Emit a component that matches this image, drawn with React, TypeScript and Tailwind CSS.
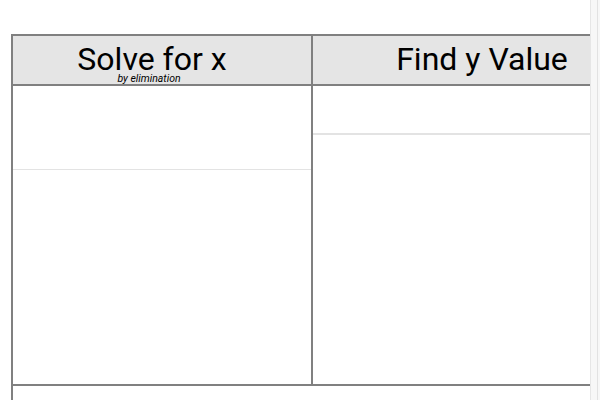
import React from "react";

const App: React.FC = () => {
  return (
    <div className="flex h-[400px] overflow-hidden bg-white font-['Roboto',sans-serif] text-black">
      <div className="min-w-0 flex-1 overflow-hidden pt-[34px] pl-[11px]">
        <div className="w-[660px] border-l-2 border-[#808080]">
          {/* header row */}
          <div className="flex border-y-2 border-[#808080] bg-[#e5e5e5]">
            <div className="flex h-[48px] w-[298px] flex-col items-center pr-[20px] leading-none">
              <span className="mt-[7px] text-[32px] leading-[32px]">Solve for x</span>
              <span className="mt-[-1px] mr-[6px] text-[10.5px] italic leading-[10px]">by elimination</span>
            </div>
            <div className="flex h-[48px] flex-1 justify-center border-l-2 border-[#808080] pr-[20px]">
              <span className="mt-[7px] text-[32px] leading-[32px]">Find y Value</span>
            </div>
          </div>
          {/* body */}
          <div className="flex border-b-2 border-[#808080]">
            <div className="flex w-[298px] flex-col">
              <div className="h-[84px] border-b border-[#e3e3e3]" />
              <div className="h-[214px]" />
            </div>
            <div className="flex flex-1 flex-col border-l-2 border-[#808080]">
              <div className="h-[49px] border-b-2 border-[#e3e3e3]" />
              <div className="flex-1" />
            </div>
          </div>
          <div className="h-[120px]" />
        </div>
      </div>
      {/* scrollbar track */}
      <div className="w-[10px] shrink-0 border-l border-[#e6e6e6] bg-[#f7f7f7] pr-[2px]">
        <div className="h-full border-r border-[#e2e2e2]" />
      </div>
    </div>
  );
};

export default App;
